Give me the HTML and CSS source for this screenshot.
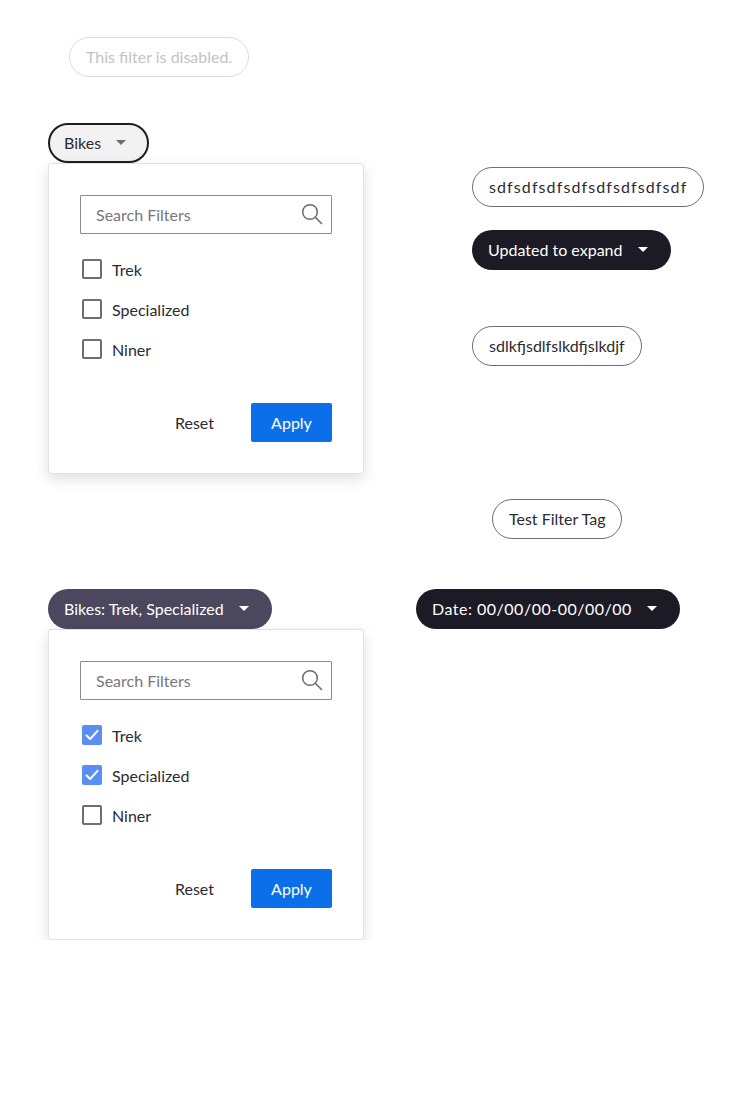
FILE: index.html
```html
<!DOCTYPE html>
<html>
<head>
<meta charset="utf-8">
<link rel="stylesheet" href="styles.css">
</head>
<body>
<div class="page">
  <div class="row-disabled">
    <span class="pill pill-disabled">This filter is disabled.</span>
  </div>

  <div class="row row-b">
    <div class="left-col">
      <button class="pill pill-open">Bikes <span class="caret"></span></button>
      <div class="panel">
        <div class="search">
          <span class="placeholder">Search Filters</span>
          <svg class="search-icon" width="22" height="22" viewBox="0 0 22 22"><circle cx="9" cy="9" r="7.3" fill="none" stroke="#6b6b70" stroke-width="1.5"/><line x1="14.3" y1="14.3" x2="20.5" y2="20.5" stroke="#6b6b70" stroke-width="1.6" stroke-linecap="round"/></svg>
        </div>
        <ul class="options">
          <li><span class="box"></span>Trek</li>
          <li><span class="box"></span>Specialized</li>
          <li><span class="box"></span>Niner</li>
        </ul>
        <div class="actions">
          <span class="reset">Reset</span>
          <span class="apply">Apply</span>
        </div>
      </div>
    </div>
    <div class="right-col">
      <span class="pill pill-outline p1 wide">sdfsdfsdfsdfsdfsdfsdfsdf</span>
      <span class="pill pill-dark p2">Updated to expand <span class="caret caret-light"></span></span>
      <span class="pill pill-outline p3">sdlkfjsdlfslkdfjslkdjf</span>
      <span class="pill pill-outline p4">Test Filter Tag</span>
    </div>
  </div>

  <div class="row row-c">
    <div class="left-col">
      <button class="pill pill-active">Bikes: Trek, Specialized <span class="caret caret-light"></span></button>
      <div class="panel">
        <div class="search">
          <span class="placeholder">Search Filters</span>
          <svg class="search-icon" width="22" height="22" viewBox="0 0 22 22"><circle cx="9" cy="9" r="7.3" fill="none" stroke="#6b6b70" stroke-width="1.5"/><line x1="14.3" y1="14.3" x2="20.5" y2="20.5" stroke="#6b6b70" stroke-width="1.6" stroke-linecap="round"/></svg>
        </div>
        <ul class="options">
          <li><span class="box checked"><svg width="14" height="12" viewBox="0 0 14 12"><path d="M1.5 6.5 L5.2 10 L12.5 1.8" fill="none" stroke="#fff" stroke-width="2" stroke-linecap="round" stroke-linejoin="round"/></svg></span>Trek</li>
          <li><span class="box checked"><svg width="14" height="12" viewBox="0 0 14 12"><path d="M1.5 6.5 L5.2 10 L12.5 1.8" fill="none" stroke="#fff" stroke-width="2" stroke-linecap="round" stroke-linejoin="round"/></svg></span>Specialized</li>
          <li><span class="box"></span>Niner</li>
        </ul>
        <div class="actions">
          <span class="reset">Reset</span>
          <span class="apply">Apply</span>
        </div>
      </div>
    </div>
    <div class="right-col-c">
      <span class="pill pill-dark date">Date: 00/00/00-00/00/00 <span class="caret caret-light"></span></span>
    </div>
  </div>
</div>
</body>
</html>
```

FILE: styles.css
```css
* { box-sizing: border-box; }
html, body { margin: 0; padding: 0; background: #fff; }
body {
  font-family: "Lato", "Noto Sans", sans-serif;
  font-size: 16px;
  color: #2b2b33;
}
.page {
  padding: 37px 0 0 48px;
  width: 751px;
}
.row-disabled { padding-left: 21px; height: 86px; }
.pill {
  display: inline-flex;
  align-items: center;
  height: 40px;
  padding: 0 16px 1px;
  border-radius: 20px;
  font-family: inherit;
  font-size: 16px;
  white-space: nowrap;
  line-height: 1;
  margin: 0;
}
.pill-disabled {
  border: 1px solid #dcdcdc;
  color: #c3c3c3;
}
.pill-open {
  border: 2px solid #1e1d28;
  background: #f2f2f2;
  color: #2b2b33;
  padding: 0 21px 1px 14px;
}
.pill-outline {
  border: 1px solid #6e6e72;
  background: #fff;
  color: #2b2b33;
}
.wide { letter-spacing: 1.1px; }
.date { letter-spacing: 0.5px; }
.pill-dark {
  border: none;
  background: #1c1b25;
  color: #fff;
  padding-right: 23px;
}
.pill-active {
  border: none;
  background: #4a475e;
  color: #fff;
  padding-right: 23px;
}
.caret {
  display: inline-block;
  width: 0; height: 0;
  margin-left: 15px;
  border-left: 5px solid transparent;
  border-right: 5px solid transparent;
  border-top: 5px solid #6f6f74;
}
.caret-light { border-top-color: #fff; }

.row { display: flex; }
.left-col { width: 316px; display: flex; flex-direction: column; align-items: flex-start; }
.panel {
  margin-top: 0;
  width: 316px;
  border: 1px solid #e1e1e1;
  border-radius: 3px;
  background: #fff;
  box-shadow: 0 5px 14px rgba(0,0,0,0.13);
  padding: 31px;
}
.search {
  height: 39px;
  border: 1px solid #8a8a8e;
  border-radius: 1px;
  display: flex;
  align-items: center;
  justify-content: space-between;
  padding: 0 8px 1px 15px;
}
.placeholder { color: #77777c; font-size: 16px; }
.search-icon { display: block; }
.options { list-style: none; margin: 25px 0 0; padding: 0 0 0 2px; display: flex; flex-direction: column; gap: 20px; }
.options li { display: flex; align-items: center; height: 20px; gap: 10px; font-size: 16px; color: #2b2b33; }
.box {
  width: 20px; height: 20px;
  border: 2px solid #6e6e73;
  border-radius: 2px;
  display: flex; align-items: center; justify-content: center;
  flex: none;
}
.box.checked { background: #5b8ef2; border-color: #5b8ef2; }
.actions {
  margin-top: 44px;
  display: flex;
  justify-content: flex-end;
  align-items: center;
  gap: 37px;
}
.reset { font-size: 16px; color: #2b2b33; }
.apply {
  width: 81px; height: 39px;
  background: #0a6fe9;
  color: #fff;
  border-radius: 2px;
  display: flex; align-items: center; justify-content: center;
  padding-bottom: 1px;
}
.right-col {
  margin-left: 108px;
  padding-top: 44px;
  display: flex;
  flex-direction: column;
  align-items: flex-start;
}
.p2 { margin-top: 23px; }
.p3 { margin-top: 56px; }
.p4 { margin-top: 133px; margin-left: 20px; }
.row-c { margin-top: 50px; }
.right-col-c { margin-left: 52px; }
```
